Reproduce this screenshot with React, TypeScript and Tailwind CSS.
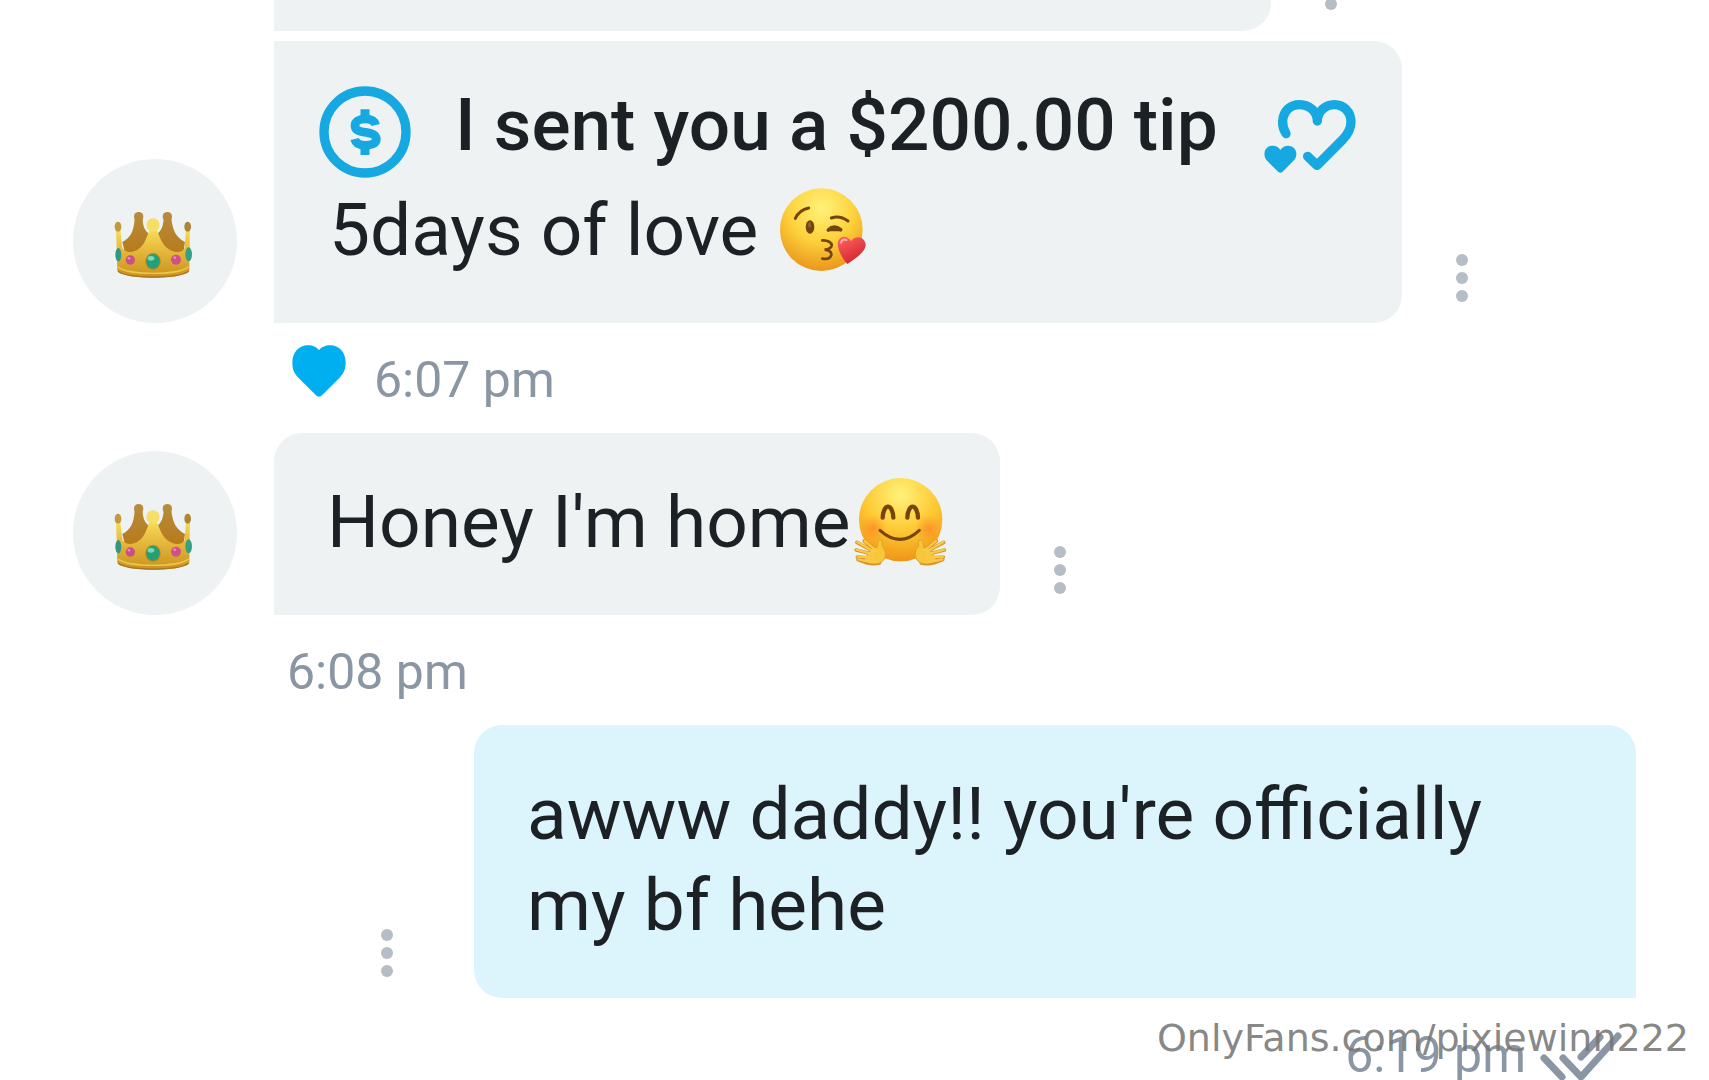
import type { ReactNode } from "react";

const TIP = "#16a8e0";

function Dots() {
  return (
    <button type="button" aria-label="Message options" className="shrink-0 mb-[21px] text-[#b6bdc6]">
      <svg width="12" height="48" viewBox="0 0 12 48" fill="currentColor" className="block">
        <circle cx="6" cy="6" r="6" />
        <circle cx="6" cy="24" r="6" />
        <circle cx="6" cy="42" r="6" />
      </svg>
    </button>
  );
}

function Crown() {
  return (
    <svg width="84" height="84" viewBox="159 147 252 252" role="img" aria-label="Crown">
      <defs>
        <linearGradient id="crownFront" x1="0" y1="0" x2="0" y2="1">
          <stop offset="0" stopColor="#f9e25c" />
          <stop offset="0.45" stopColor="#e6b93c" />
          <stop offset="1" stopColor="#c8921f" />
        </linearGradient>
        <linearGradient id="crownBack" x1="0" y1="0" x2="0" y2="1">
          <stop offset="0" stopColor="#b58a35" />
          <stop offset="1" stopColor="#b97a1c" />
        </linearGradient>
      </defs>
      <path d="M224 205C222 245 210 265 187 276L195 308H370L375 276C350 264 338 244 334 205H311C310 235 300 250 280 258C258 250 248 235 248 205Z" fill="url(#crownBack)" />
      <circle cx="236" cy="200" r="14" fill="#b58a3a" />
      <circle cx="322" cy="200" r="14" fill="#b58a3a" />
      <path d="M168 232L172 362C192 390 368 390 388 362L390 232H378L374 294C368 308 350 308 337 303C310 294 300 265 291 240H268C260 266 249 296 222 304C208 308 194 305 187 294L180 232Z" fill="url(#crownFront)" />
      <ellipse cx="174" cy="230" rx="10" ry="15" fill="#c29a3e" />
      <ellipse cx="383" cy="230" rx="10" ry="15" fill="#b18432" />
      <circle cx="279" cy="225" r="20" fill="#f6df66" />
      <path d="M174 350C203 377 357 377 386 350" fill="none" stroke="#f0c746" strokeWidth="4" />
      <path d="M174 364C206 387 354 387 386 364" fill="none" stroke="#a87420" strokeWidth="4" />
      <ellipse cx="175" cy="314" rx="9" ry="20" fill="#349783" />
      <ellipse cx="386" cy="313" rx="10" ry="21" fill="#35a083" />
      <circle cx="211" cy="330" r="14" fill="#c94f87" />
      <circle cx="348" cy="329" r="15" fill="#cf4f8b" />
      <ellipse cx="279" cy="334" rx="23" ry="25" fill="#b5851f" />
      <ellipse cx="279" cy="334" rx="20" ry="22" fill="#20a179" />
      <ellipse cx="273" cy="325" rx="10" ry="7" fill="#7bdab4" />
      <circle cx="207" cy="325" r="4" fill="#e691b6" />
      <circle cx="344" cy="323" r="4" fill="#e691b6" />
    </svg>
  );
}

function KissFace() {
  return (
    <svg width="88" height="85" viewBox="55 50 264 255" role="img" aria-label="Face blowing a kiss" className="ml-[3px] inline align-[-17px]">
      <defs>
        <radialGradient id="kissFace" cx="0.5" cy="0.24" r="0.8">
          <stop offset="0" stopColor="#fff27a" />
          <stop offset="0.5" stopColor="#fdd23c" />
          <stop offset="1" stopColor="#e88f18" />
        </radialGradient>
        <linearGradient id="kissHeart" x1="0" y1="0" x2="0.5" y2="1">
          <stop offset="0" stopColor="#ff6664" />
          <stop offset="1" stopColor="#d3252f" />
        </linearGradient>
      </defs>
      <circle cx="182" cy="178" r="124" fill="url(#kissFace)" />
      <g fill="none" stroke="#74440b" strokeLinecap="round">
        <path d="M104 144Q116 119 144 113" strokeWidth="9" />
        <path d="M212 143Q237 134 262 152" strokeWidth="9" />
        <path d="M203 179Q220 163 240 178" strokeWidth="11" />
        <path d="M203 179H240" strokeWidth="7" />
        <path d="M185 210C201 209 214 217 213 226C212 234 200 237 192 238C203 239 213 244 212 253C210 264 198 267 185 265" strokeWidth="8" />
      </g>
      <ellipse cx="148" cy="170" rx="13" ry="20" fill="#74440b" />
      <ellipse cx="147" cy="164" rx="5" ry="8" fill="#946322" />
      <path d="M260 281C242 260 226 231 233 211C240 195 261 195 271 213C281 196 307 197 314 217C321 241 285 264 260 281Z" fill="url(#kissHeart)" />
      <path d="M241 217Q245 204 257 209" fill="none" stroke="#ffb0aa" strokeWidth="6" strokeLinecap="round" />
    </svg>
  );
}

function HugFace() {
  return (
    <svg width="93" height="89" viewBox="36 50 279 267" role="img" aria-label="Hugging face" className="ml-[3px] inline align-[-19px]">
      <defs>
        <radialGradient id="hugFace" cx="0.5" cy="0.2" r="0.85">
          <stop offset="0" stopColor="#fff27a" />
          <stop offset="0.5" stopColor="#fdca35" />
          <stop offset="1" stopColor="#ef8e13" />
        </radialGradient>
        <radialGradient id="hugCheek">
          <stop offset="0" stopColor="#ff6a1f" stopOpacity="0.5" />
          <stop offset="1" stopColor="#ff7a1f" stopOpacity="0" />
        </radialGradient>
        <g id="hugHand">
          <path
            d="M112 308C91 314 66 306 48 298M89 293L46 290M88 280L43 269M91 271L45 246M96 266L67 242"
            fill="none"
            stroke="#d99224"
            strokeWidth="11"
            strokeLinecap="round"
          />
          <path d="M108 243C117 232 123 242 120 258C136 270 134 302 111 309C92 314 70 307 67 298C77 284 84 262 105 262Z" fill="#f8c63a" stroke="#e4a026" strokeWidth="3" />
          <path
            d="M105 304C86 307 66 300 49 297M95 292L47 289M94 282L44 268M98 275L46 245M102 270L68 242"
            fill="none"
            stroke="#fac947"
            strokeWidth="7"
            strokeLinecap="round"
          />
        </g>
      </defs>
      <circle cx="176" cy="178" r="125" fill="url(#hugFace)" />
      <circle cx="94" cy="203" r="40" fill="url(#hugCheek)" />
      <circle cx="258" cy="203" r="40" fill="url(#hugCheek)" />
      <path d="M122 172C124 128 152 128 154 172" fill="none" stroke="#78440a" strokeWidth="13" strokeLinecap="round" />
      <path d="M196 172C198 128 226 128 228 172" fill="none" stroke="#78440a" strokeWidth="13" strokeLinecap="round" />
      <path d="M114 210Q174 264 232 210" fill="none" stroke="#78440a" strokeWidth="9" strokeLinecap="round" />
      <use href="#hugHand" />
      <use href="#hugHand" transform="translate(350 0) scale(-1 1)" />
    </svg>
  );
}

function TipCoin() {
  return (
    <svg width="92" height="92" viewBox="55 48 276 276" fill="none" stroke={TIP} className="shrink-0" aria-hidden="true">
      <circle cx="193" cy="186" r="123" strokeWidth="28" />
      <path d="M193 118V150M193 222V255" strokeWidth="27" />
      <path
        d="M225 165C222 152 210 147 194 147C176 147 163 154 163 167C163 182 178 184 194 187C212 190 227 193 227 208C227 221 212 226 194 226C176 226 165 220 162 207"
        strokeWidth="26"
      />
    </svg>
  );
}

function TipHearts() {
  return (
    <svg width="98" height="91" viewBox="90 21 294 273" className="shrink-0" aria-hidden="true">
      <path
        d="M162 161C154 148 151 139 152 123C154 94 174 74 203 74C233 74 256 96 256 123C256 96 279 74 307 74C335 74 357 96 357 126C357 148 347 163 332 179L255 256L227 229"
        fill="none"
        stroke={TIP}
        strokeWidth="28"
        strokeLinecap="round"
        strokeLinejoin="round"
      />
      <path d="M139 276L104 241C91 225 97 197 122 197C133 197 141 202 145 210C150 202 158 197 168 197C193 197 200 225 186 241L151 276Q145 281 139 276Z" fill={TIP} />
    </svg>
  );
}

function LikeHeart() {
  return (
    <button type="button" aria-label="Liked" className="shrink-0 mt-[22px] self-start">
      <svg width="54" height="52" viewBox="66 72 162 156" fill="#00aff0" className="block">
        <path d="M138 223L86 171C70 154 67 143 67 123C67 95 87 73 114 73C129 73 141 79 147 88C153 79 166 73 181 73C207 73 227 95 227 123C227 143 223 155 208 171L156 223Q147 231 138 223Z" />
      </svg>
    </button>
  );
}

function Ticks() {
  return (
    <svg width="84" height="50" viewBox="0 0 84 50" fill="none" stroke="#8a96a3" strokeWidth="7" strokeLinecap="round" className="mt-[34px] shrink-0" role="img" aria-label="Read">
      <path d="M4 26L22 45M41 25L60 5" />
      <path d="M23 26L41 45L78 4" />
    </svg>
  );
}

function Avatar() {
  return (
    <div className="flex size-[164px] shrink-0 items-center justify-center rounded-full bg-[#eef2f3]">
      <Crown />
    </div>
  );
}

function Incoming({ children, shape }: { children: ReactNode; shape: string }) {
  return (
    <div className="flex items-end">
      <Avatar />
      <div className={`ml-[37px] mr-[54px] bg-[#eef2f3] ${shape}`}>{children}</div>
      <Dots />
    </div>
  );
}

function Meta({ children }: { children: ReactNode }) {
  return <div className="flex h-[110px] text-[50px] leading-[60px] text-[#8a96a3]">{children}</div>;
}

export default function App() {
  return (
    <main className="relative h-screen overflow-hidden bg-white px-[73px] font-['Roboto',sans-serif] text-[73px] leading-[91px] text-[#1c2125]">
      {/* tail of the previous message */}
      <div className="flex h-[31px] items-end pl-[201px]">
        <div className="mr-[54px] h-[31px] w-[997px] rounded-br-[28px] bg-[#eef2f3]" />
        <Dots />
      </div>

      <div className="mt-[10px]">
        <Incoming shape="rounded-r-[28px] pt-[39px] pb-[47px] pl-[45px] pr-[42px]">
          <div className="flex h-[98px] items-end">
            <TipCoin />
            <p className="mx-[44px] self-start whitespace-nowrap font-medium">I sent you a $200.00 tip</p>
            <TipHearts />
          </div>
          <p className="mt-[7px] pl-[10px]">
            5days of love <KissFace />
          </p>
        </Incoming>
      </div>
      <div className="pl-[219px]">
        <Meta>
          <LikeHeart />
          <time className="ml-[28px] pt-[27px]">6:07 pm</time>
        </Meta>
      </div>

      <Incoming shape="rounded-r-[28px] rounded-tl-[28px] pt-[44px] pb-[47px] pl-[53px] pr-[53px]">
        <p className="whitespace-nowrap">
          Honey I'm home
          <HugFace />
        </p>
      </Incoming>
      <div className="pl-[214px]">
        <Meta>
          <time className="pt-[27px]">6:08 pm</time>
        </Meta>
      </div>

      <div className="flex items-end justify-end">
        <Dots />
        <div className="ml-[81px] w-[1162px] rounded-t-[28px] rounded-bl-[28px] bg-[#dcf4fc] pt-[44px] pb-[47px] pl-[53px] pr-[53px]">
          <p>awww daddy!! you're officially my bf hehe</p>
        </div>
      </div>
      <div className="flex justify-end pr-[12px]">
        <Meta>
          <time className="mr-[14px] pt-[27px]">6:19 pm</time>
          <Ticks />
        </Meta>
      </div>

      <p className="absolute right-[20px] bottom-[20px] font-['DejaVu_Sans',sans-serif] text-[38px] leading-[44px] text-[#777777]/90">
        OnlyFans.com/pixiewinn222
      </p>
    </main>
  );
}
